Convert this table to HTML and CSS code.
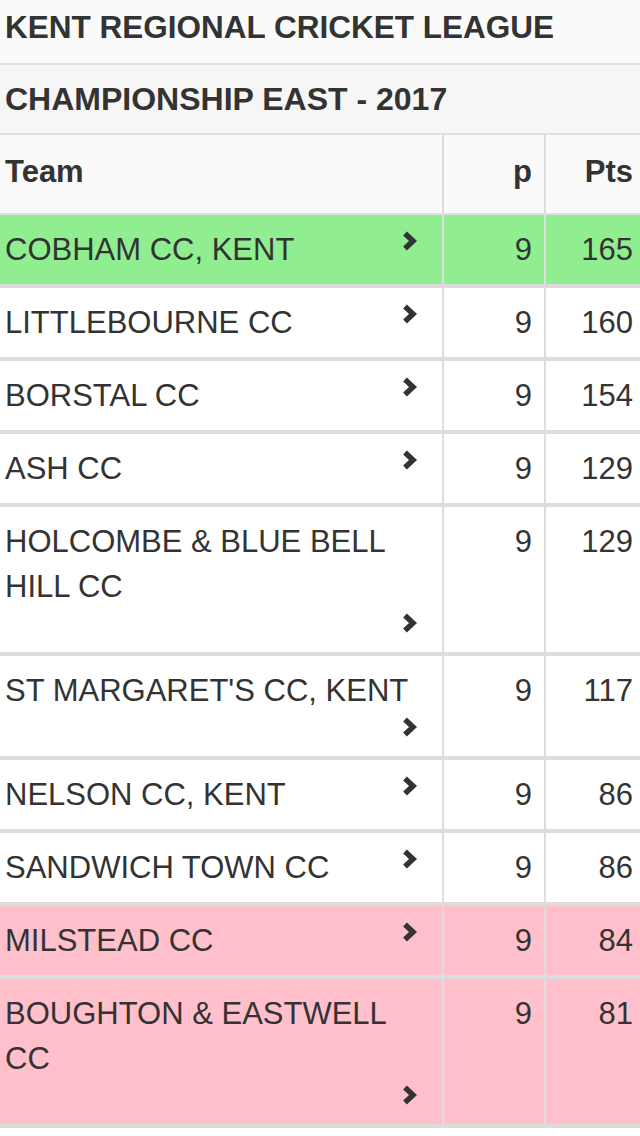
FILE: index.html
```html
<!DOCTYPE html>
<html>
<head>
<meta charset="utf-8">
<link rel="stylesheet" href="styles.css">
</head>
<body>
<div class="page">
  <div class="title">KENT REGIONAL CRICKET LEAGUE</div>
  <div class="subtitle">CHAMPIONSHIP EAST - 2017</div>
  <div class="table">
    <div class="row head">
      <div class="cell team">Team</div>
      <div class="cell num">p</div>
      <div class="cell num pts">Pts</div>
    </div>
    <div class="row promo">
      <div class="cell team"><span class="name">COBHAM CC, KENT</span><span class="chev"><svg viewBox="0 0 16 22" width="16" height="22"><polyline points="3,3.5 11,11 3,18.5" /></svg></span></div>
      <div class="cell num">9</div>
      <div class="cell num pts">165</div>
    </div>
    <div class="row">
      <div class="cell team"><span class="name">LITTLEBOURNE CC</span><span class="chev"><svg viewBox="0 0 16 22" width="16" height="22"><polyline points="3,3.5 11,11 3,18.5" /></svg></span></div>
      <div class="cell num">9</div>
      <div class="cell num pts">160</div>
    </div>
    <div class="row">
      <div class="cell team"><span class="name">BORSTAL CC</span><span class="chev"><svg viewBox="0 0 16 22" width="16" height="22"><polyline points="3,3.5 11,11 3,18.5" /></svg></span></div>
      <div class="cell num">9</div>
      <div class="cell num pts">154</div>
    </div>
    <div class="row">
      <div class="cell team"><span class="name">ASH CC</span><span class="chev"><svg viewBox="0 0 16 22" width="16" height="22"><polyline points="3,3.5 11,11 3,18.5" /></svg></span></div>
      <div class="cell num">9</div>
      <div class="cell num pts">129</div>
    </div>
    <div class="row">
      <div class="cell team"><span class="name">HOLCOMBE &amp; BLUE BELL HILL CC</span><span class="chev"><svg viewBox="0 0 16 22" width="16" height="22"><polyline points="3,3.5 11,11 3,18.5" /></svg></span></div>
      <div class="cell num">9</div>
      <div class="cell num pts">129</div>
    </div>
    <div class="row">
      <div class="cell team"><span class="name">ST MARGARET'S CC, KENT</span><span class="chev"><svg viewBox="0 0 16 22" width="16" height="22"><polyline points="3,3.5 11,11 3,18.5" /></svg></span></div>
      <div class="cell num">9</div>
      <div class="cell num pts">117</div>
    </div>
    <div class="row">
      <div class="cell team"><span class="name">NELSON CC, KENT</span><span class="chev"><svg viewBox="0 0 16 22" width="16" height="22"><polyline points="3,3.5 11,11 3,18.5" /></svg></span></div>
      <div class="cell num">9</div>
      <div class="cell num pts">86</div>
    </div>
    <div class="row">
      <div class="cell team"><span class="name">SANDWICH TOWN CC</span><span class="chev"><svg viewBox="0 0 16 22" width="16" height="22"><polyline points="3,3.5 11,11 3,18.5" /></svg></span></div>
      <div class="cell num">9</div>
      <div class="cell num pts">86</div>
    </div>
    <div class="row releg">
      <div class="cell team"><span class="name">MILSTEAD CC</span><span class="chev"><svg viewBox="0 0 16 22" width="16" height="22"><polyline points="3,3.5 11,11 3,18.5" /></svg></span></div>
      <div class="cell num">9</div>
      <div class="cell num pts">84</div>
    </div>
    <div class="row releg">
      <div class="cell team"><span class="name">BOUGHTON &amp; EASTWELL CC</span><span class="chev"><svg viewBox="0 0 16 22" width="16" height="22"><polyline points="3,3.5 11,11 3,18.5" /></svg></span></div>
      <div class="cell num">9</div>
      <div class="cell num pts">81</div>
    </div>
  </div>
</div>
</body>
</html>
```
FILE: styles.css
```css
* { box-sizing: border-box; }
html, body { margin: 0; padding: 0; background: #fff; }
body {
  font-family: "Liberation Sans", Arial, Helvetica, sans-serif;
  color: #333;
  width: 640px;
}
.page { width: 640px; }
.title {
  background: #fafafa;
  font-weight: bold;
  font-size: 31.5px;
  line-height: 45px;
  padding: 5px 5px 13px 5px;
  border-bottom: 2px solid #e0e0e0;
}
.subtitle {
  background: #f6f6f6;
  font-weight: bold;
  font-size: 32px;
  line-height: 45px;
  padding: 12px 5px 11px 5px;
  border-bottom: 2px solid #dedede;
}
.row {
  display: grid;
  grid-template-columns: 442px 102px 96px;
  border-bottom: 4px solid #dcdcdc;
  background: #fff;
  font-size: 31px;
  line-height: 45px;
}
.row.head {
  background: #fafafa;
  font-weight: bold;
  border-bottom: 2px solid #e0e0e0;
}
.row.head .cell { padding-top: 14px; padding-bottom: 19px; }
.row.promo { background: #90ee90; }
.row.releg { background: #ffc0cb; }
.cell {
  padding: 12px 12px 12px 5px;
}
.cell + .cell { border-left: 2px solid #dddddd; }
.num { text-align: right; padding-right: 12px; }
.num.pts { padding-right: 7px; }
.team { padding-right: 24px; }
.name { display: inline-block; vertical-align: top; }
.chev {
  float: right;
  width: 16px;
  height: 31px;
  padding-top: 3px;
}
.chev svg { display: block; }
.chev polyline {
  fill: none;
  stroke: #333;
  stroke-width: 5.5;
  stroke-linecap: butt;
  stroke-linejoin: miter;
}
```
